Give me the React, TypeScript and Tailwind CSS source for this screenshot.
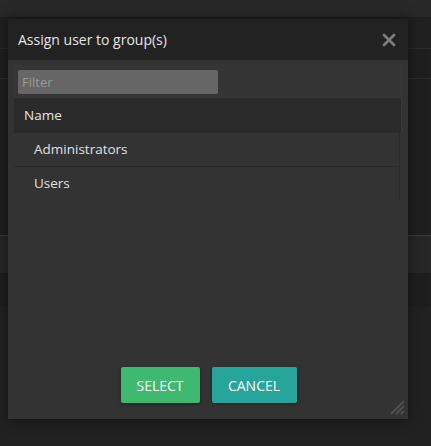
import { X } from 'lucide-react'

const groups = ['Administrators', 'Users']

export default function App() {
  return (
    <div
      className="relative w-[431px] h-[446px] overflow-hidden bg-[#212121]"
      style={{ fontFamily: '"Open Sans", "Noto Sans", sans-serif' }}
    >
      {/* Page behind the dialog */}
      <div className="flex flex-col">
        <div className="h-[18px] bg-[#282828] border-b border-[#1c1c1c]" />
        <div className="h-[31px] bg-[#202020] border-b border-[#2c2c2c]" />
        <div className="h-[30px] bg-[#1f1f1f] border-b border-[#2a2a2a]" />
        <div className="h-[156px] bg-[#1f1f1f]" />
        <div className="h-[1px] bg-[#3a3a3a]" />
        <div className="h-[37px] bg-[#262626]" />
        <div className="h-[34px] bg-[#1e1e1e]" />
      </div>

      {/* Dialog */}
      <div className="absolute left-[8px] top-[19px] w-[400px] h-[400px] flex flex-col bg-[#333333] shadow-[0_0_12px_rgba(0,0,0,0.5)]">
        <div className="h-[41px] shrink-0 flex items-center justify-between pl-[10px] pr-[9px] bg-[#222222]">
          <span className="text-[14px] text-[#e6e6e6]">Assign user to group(s)</span>
          <X className="w-[20px] h-[20px] text-[#7d7d7d]" strokeWidth={3.2} />
        </div>

        <div className="flex-1 flex flex-col px-[6px] pt-[5px] pb-[16px]">
          <div className="bg-[#353535]">
            <div className="px-[4px] pt-[5px] pb-[4px]">
              <input
                placeholder="Filter"
                className="block w-[200px] h-[24px] rounded-[2px] bg-[#666666] px-[4px] text-[13px] text-[#ddd] placeholder:text-[#9a9a9a] outline-none"
              />
            </div>
          </div>
          <div className="h-[34px] flex items-center pl-[10px] bg-[#2a2a2a] border-r border-[#3a3a3a] text-[13.5px] text-[#e6e6e6]">
            Name
          </div>
          {groups.map((g) => (
            <div
              key={g}
              className="h-[34px] flex items-center pl-[20px] mr-[2px] border-t border-r border-[#2a2a2a] text-[13.5px] text-[#e0e0e0] last:border-b"
            >
              {g}
            </div>
          ))}

          <div className="flex-1" />

          <div className="flex justify-center gap-[12px] pl-[1px]">
            <button className="w-[79px] h-[36px] rounded-[2px] bg-[#3dba6f] text-white text-[14px] shadow-[0_1px_3px_rgba(0,0,0,0.4)]">
              SELECT
            </button>
            <button className="w-[85px] h-[36px] rounded-[2px] bg-[#26a69a] text-white text-[14px] shadow-[0_1px_3px_rgba(0,0,0,0.4)]">
              CANCEL
            </button>
          </div>
        </div>

        {/* Resize grip */}
        <svg className="absolute right-[3px] bottom-[4px] w-[16px] h-[16px]" viewBox="0 0 16 16">
          <path d="M2 15 L15 2 M7 15 L15 7 M12 15 L15 12" stroke="#4f4f4f" strokeWidth="1.8" />
        </svg>
      </div>
    </div>
  )
}
